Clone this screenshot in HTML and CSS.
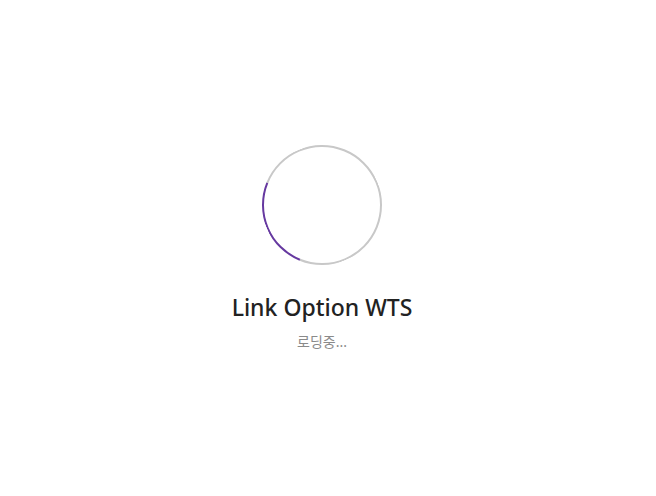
FILE: index.html
```html
<!DOCTYPE html>
<html lang="ko">
<head>
  <meta charset="UTF-8">
  <meta name="viewport" content="width=device-width, initial-scale=1.0">
  <title>Link Option WTS</title>
  <link rel="stylesheet" href="styles.css">
</head>
<body>

<div class="loading">
  <div class="spinner"></div>
  <h1 class="loading-title">Link Option WTS</h1>
  <p class="loading-text">로딩중...</p>
</div>

</body>
</html>
```

FILE: styles.css
```css
html, body {
  height: 100%;
}

body {
  margin: 0;
  background-color: #fff;
  font-family: "Noto Sans", "Noto Sans CJK KR", sans-serif;
}

.loading {
  height: 100%;
  padding-right: 12px;
  display: flex;
  flex-direction: column;
  align-items: center;
  justify-content: center;
}

.spinner {
  width: 116px;
  height: 116px;
  border: 2px solid #c8c8c8;
  border-left-color: #6639a0;
  border-radius: 50%;
  transform: rotate(-23deg);
}

.loading-title {
  margin: 26px 0 0;
  font-size: 23px;
  font-weight: 500;
  line-height: 32px;
  color: #222;
}

.loading-text {
  margin: 9px 0 0;
  font-size: 14px;
  line-height: 20px;
  color: #8a8a8a;
}
```
